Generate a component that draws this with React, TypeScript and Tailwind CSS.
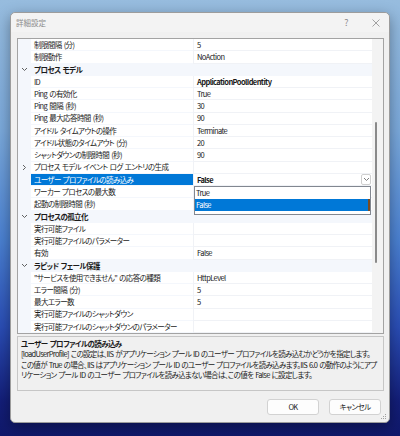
import React from 'react';

type Row =
  | { kind: 'cat'; label: string }
  | { kind: 'prop'; label: string; value?: string; bold?: boolean; expander?: boolean; selected?: boolean };

const rows: Row[] = [
  { kind: 'prop', label: '制限間隔 (分)', value: '5' },
  { kind: 'prop', label: '制限動作', value: 'NoAction' },
  { kind: 'cat', label: 'プロセス モデル' },
  { kind: 'prop', label: 'ID', value: 'ApplicationPoolIdentity', bold: true },
  { kind: 'prop', label: 'Ping の有効化', value: 'True' },
  { kind: 'prop', label: 'Ping 間隔 (秒)', value: '30' },
  { kind: 'prop', label: 'Ping 最大応答時間 (秒)', value: '90' },
  { kind: 'prop', label: 'アイドル タイムアウトの操作', value: 'Terminate' },
  { kind: 'prop', label: 'アイドル状態のタイムアウト (分)', value: '20' },
  { kind: 'prop', label: 'シャットダウンの制限時間 (秒)', value: '90' },
  { kind: 'prop', label: 'プロセス モデル イベント ログ エントリの生成', expander: true },
  { kind: 'prop', label: 'ユーザー プロファイルの読み込み', value: 'False', bold: true, selected: true },
  // values of the next two rows sit under the open list
  { kind: 'prop', label: 'ワーカー プロセスの最大数' },
  { kind: 'prop', label: '起動の制限時間 (秒)' },
  { kind: 'cat', label: 'プロセスの孤立化' },
  { kind: 'prop', label: '実行可能ファイル' },
  { kind: 'prop', label: '実行可能ファイルのパラメーター' },
  { kind: 'prop', label: '有効', value: 'False' },
  { kind: 'cat', label: 'ラピッド フェール保護' },
  { kind: 'prop', label: '"サービスを使用できません" の応答の種類', value: 'HttpLevel' },
  { kind: 'prop', label: 'エラー間隔 (分)', value: '5' },
  { kind: 'prop', label: '最大エラー数', value: '5' },
  { kind: 'prop', label: '実行可能ファイルのシャットダウン' },
  { kind: 'prop', label: '実行可能ファイルのシャットダウンのパラメーター' },
];

function ChevronDown({ color = '#505050' }: { color?: string }) {
  return (
    <svg width="7" height="5" viewBox="0 0 7 5">
      <path d="M1 1 L3.5 3.5 L6 1" fill="none" stroke={color} strokeWidth="0.9" />
    </svg>
  );
}

function ChevronRight() {
  return (
    <svg width="5" height="7" viewBox="0 0 5 7">
      <path d="M1 1 L3.5 3.5 L1 6" fill="none" stroke="#505050" strokeWidth="0.9" />
    </svg>
  );
}

function GridRow({ row }: { row: Row }) {
  if (row.kind === 'cat') {
    return (
      <div className="flex h-[12.25px] items-center bg-[#f4f7fc]">
        <div className="flex w-[13px] justify-center">
          <ChevronDown />
        </div>
        <div className="pl-[3px] font-bold whitespace-nowrap">{row.label}</div>
      </div>
    );
  }
  return (
    <div className="flex h-[12.25px]">
      <div className="flex w-[13px] items-center justify-center bg-[#f4f7fc]">
        {row.expander && <ChevronRight />}
      </div>
      <div
        className={`flex w-[162px] items-center overflow-hidden whitespace-nowrap border-b border-[#f4f7fc] pl-[3px] ${
          row.selected ? 'bg-[#0078d7] text-white' : ''
        }`}
      >
        {row.label}
      </div>
      <div className="flex flex-1 items-center border-b border-l border-[#f0f2f6] pl-[3px]">
        <span className={row.bold ? 'font-bold' : ''}>{row.value}</span>
        {row.selected && (
          <div className="ml-auto mr-[1px] flex h-[11px] w-[10px] items-center justify-center rounded-[2px] border border-[#cfcfcf] bg-white">
            <ChevronDown color="#707070" />
          </div>
        )}
      </div>
    </div>
  );
}

export default function App() {
  return (
    <div className="h-[436px] w-[400px] overflow-hidden bg-[linear-gradient(180deg,#97bcde_0%,#7aa8da_30%,#4a80d0_55%,#2a4db4_75%,#131e78_92%,#10186a_100%)] pl-[10px] pt-[12px] [font-family:'Noto_Sans_CJK_JP',sans-serif] text-[7.5px] leading-none tracking-[-0.6px] [word-spacing:1px] text-[#1a1a1a] [font-feature-settings:'palt']">
      {/* dialog window */}
      <div className="relative flex h-[411px] w-[380px] flex-col rounded-[5px] border border-[#9c9c9c] bg-[#f0f0f0] shadow-[0_4px_14px_rgba(0,0,0,0.35)]">
        {/* title bar */}
        <div className="flex h-[19px] items-center rounded-t-[5px] bg-[#f3f3f3] pl-[5px] pr-[1px]">
          <span className="text-[#8c8c8c] tracking-normal">詳細設定</span>
          <div className="ml-auto flex items-center gap-[6px]">
            <span className="flex w-[24px] justify-center text-[9px] text-[#8c8c8c]">?</span>
            <span className="flex w-[24px] justify-center">
              <svg width="8" height="8" viewBox="0 0 8 8">
                <path d="M0.5 0.5 L7.5 7.5 M7.5 0.5 L0.5 7.5" stroke="#8c8c8c" strokeWidth="0.8" />
              </svg>
            </span>
          </div>
        </div>

        <div className="flex flex-1 flex-col pl-[6px] pr-[5px] pt-[6px]">
          {/* property grid */}
          <div className="flex h-[296px] border border-[#a3a3a3] bg-white">
            <div className="relative flex-1">
              {rows.map((r, i) => (
                <GridRow key={i} row={r} />
              ))}
              {/* open dropdown list */}
              <div className="absolute left-[176px] top-[147px] h-[29px] w-[177px] border border-[#828790] bg-white">
                <div className="flex h-[12px] items-center pl-[1px]">True</div>
                <div className="flex h-[12px] items-center border-r-2 border-[#7a4b22] bg-[#0078d7] pl-[1px] text-white">
                  False
                </div>
              </div>
            </div>
            {/* scrollbar */}
            <div className="w-[11px] bg-[#f3f3f3] pt-[83px]">
              <div className="ml-[3px] h-[141px] w-[2px] rounded-full bg-[#8a8a8a]" />
            </div>
          </div>

          {/* description pane */}
          <div className="mt-[2px] h-[55px] border border-[#c6c6c6] px-[3px] pt-[1px]">
            <div className="font-bold leading-[11px]">ユーザー プロファイルの読み込み</div>
            <div className="whitespace-nowrap leading-[10.5px] tracking-[-0.68px] [word-spacing:0.9px]">
              [loadUserProfile] この設定は、IIS がアプリケーション プール ID のユーザー プロファイルを読み込むかどうかを指定します。
              <br />
              この値が True の場合、IIS はアプリケーション プール ID のユーザー プロファイルを読み込みます。IIS 6.0 の動作のようにアプ
              <br />
              リケーション プール ID のユーザー プロファイルを読み込まない場合は、この値を False に設定します。
            </div>
          </div>

          {/* buttons */}
          <div className="mt-[8px] flex justify-end gap-[10px] pr-[3px]">
            <button className="flex h-[16px] w-[52px] items-center justify-center rounded-[3px] border border-[#d2d2d2] bg-[#fdfdfd]">
              OK
            </button>
            <button className="flex h-[16px] w-[52px] items-center justify-center rounded-[3px] border border-[#d2d2d2] bg-[#fdfdfd]">
              キャンセル
            </button>
          </div>
        </div>

        {/* resize grip */}
        <svg className="absolute bottom-[2px] right-[2px]" width="6" height="6" viewBox="0 0 6 6">
          <rect x="4" y="0" width="1" height="1" fill="#a0a0a0" />
          <rect x="2" y="2" width="1" height="1" fill="#a0a0a0" />
          <rect x="4" y="2" width="1" height="1" fill="#a0a0a0" />
          <rect x="0" y="4" width="1" height="1" fill="#a0a0a0" />
          <rect x="2" y="4" width="1" height="1" fill="#a0a0a0" />
          <rect x="4" y="4" width="1" height="1" fill="#a0a0a0" />
        </svg>
      </div>
    </div>
  );
}
